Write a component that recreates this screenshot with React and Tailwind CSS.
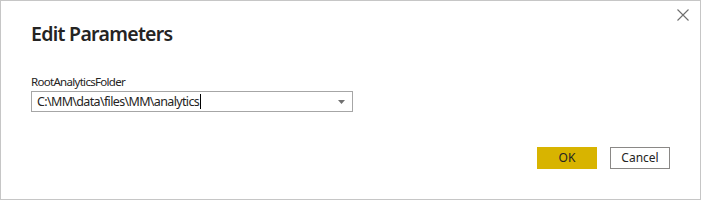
import React from "react";

export default function App() {
  return (
    <div
      className="relative w-[701px] h-[200px] bg-white border border-[#c6c6c6] flex flex-col"
      style={{ fontFamily: '"Noto Sans", "Open Sans", sans-serif' }}
    >
      <button className="absolute top-[6px] right-[9px] w-[16px] h-[16px] flex items-center justify-center">
        <svg width="12" height="12" viewBox="0 0 12 12">
          <path d="M0.5 0.5 L11.5 11.5 M11.5 0.5 L0.5 11.5" stroke="#6e6e6e" strokeWidth="1.1" fill="none" />
        </svg>
      </button>
      <div className="pl-[30px] pt-[19px]">
        <h1 className="text-[19.5px] leading-[28px] font-semibold text-[#252423] tracking-[-0.7px]">
          Edit Parameters
        </h1>
        <div className="mt-[26px] text-[11.5px] leading-[16px] text-[#252423] tracking-[-0.7px]">
          RootAnalyticsFolder
        </div>
        <div className="mt-[1px] w-[322px] h-[21px] border border-[#a6a6a6] flex items-center pl-[5px] pr-[7px]">
          <span className="text-[12.5px] leading-[16px] text-[#252423] tracking-[-0.65px]">
            C:\MM\data\files\MM\analytics
          </span>
          <span className="w-px h-[15px] bg-black ml-[1px]" />
          <span className="flex-1" />
          <svg width="7" height="4" viewBox="0 0 7 4">
            <path d="M0 0 L7 0 L3.5 4 Z" fill="#707070" />
          </svg>
        </div>
      </div>
      <div className="flex justify-end gap-[13px] pr-[30px] mt-[35px]">
        <button className="w-[60px] h-[22px] bg-[#d8b400] text-[12px] text-[#252423] flex items-center justify-center">
          OK
        </button>
        <button className="w-[60px] h-[22px] border border-[#8a8886] bg-white text-[12px] text-[#252423] flex items-center justify-center">
          Cancel
        </button>
      </div>
    </div>
  );
}
